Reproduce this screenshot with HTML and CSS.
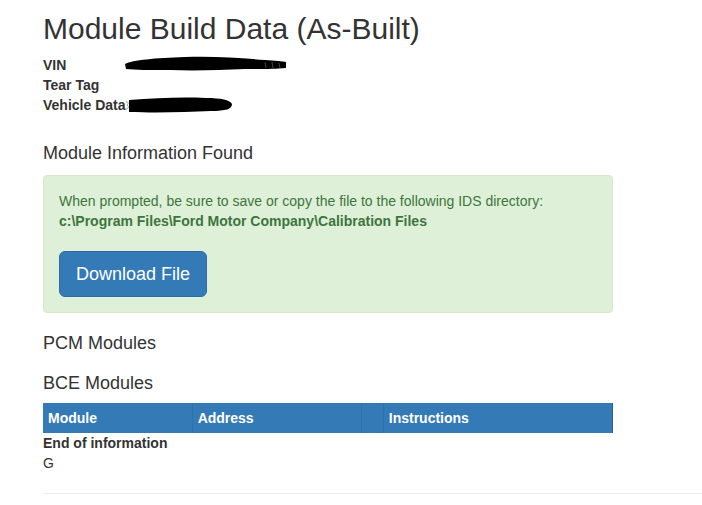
FILE: index.html
```html
<!DOCTYPE html>
<html>
<head>
<meta charset="utf-8">
<title>Module Build Data (As-Built)</title>
<link rel="stylesheet" href="styles.css">
</head>
<body>
<div class="page">
  <h2 class="title">Module Build Data (As-Built)</h2>
  <div class="facts">
    <div class="fact">
      <b class="fact-label">VIN</b>
      <span class="fact-value">
        <svg class="redact" width="164" height="20" viewBox="0 0 164 20">
          <path d="M0,9 C8,5 30,3 60,2 C90,1 115,3 140,5 C150,6 158,6 161,7 L161,13 C150,14 140,14 120,14 C95,15 70,16 45,15 C25,15 10,15 1,14 Z" fill="#000"/>
          <path d="M140,7 L141,13 M147,7 L148,13 M154,8 L155,13" stroke="#444" stroke-width="1"/>
        </svg>
      </span>
    </div>
    <div class="fact">
      <b class="fact-label">Tear Tag</b>
      <span class="fact-value"></span>
    </div>
    <div class="fact">
      <b class="fact-label">Vehicle Data</b>
      <span class="fact-value">
        <svg class="redact" width="110" height="20" viewBox="0 0 110 20">
          <path d="M3,5 C30,3 55,2 80,3 C95,3 104,5 106,9 C106,14 100,16 85,16 C60,17 35,18 3,17 Z" fill="#000"/>
          <path d="M0,7 C2,6 3,9 1,10 C3,11 3,14 0,14" stroke="#999" stroke-width="1" fill="none"/>
        </svg>
      </span>
    </div>
  </div>

  <h4 class="section-title">Module Information Found</h4>
  <div class="alert">
    <p class="alert-text">When prompted, be sure to save or copy the file to the following IDS directory:<br><b>c:\Program Files\Ford Motor Company\Calibration Files</b></p>
    <button class="btn-download" type="button">Download File</button>
  </div>

  <h4 class="section-title">PCM Modules</h4>
  <h4 class="section-title">BCE Modules</h4>
  <table class="modules">
    <colgroup>
      <col class="col-module">
      <col class="col-address">
      <col class="col-blank">
      <col class="col-instr">
    </colgroup>
    <thead>
      <tr>
        <th>Module</th>
        <th>Address</th>
        <th></th>
        <th>Instructions</th>
      </tr>
    </thead>
  </table>
  <div class="end-info">End of information</div>
  <div class="end-code">G</div>
  <hr class="rule">
</div>
</body>
</html>
```

FILE: styles.css
```css
html, body {
  margin: 0;
  padding: 0;
  background: #fff;
}

body {
  font-family: "Liberation Sans", Arial, sans-serif;
  font-size: 14px;
  line-height: 20px;
  color: #333;
}

.page {
  padding-left: 43px;
  padding-top: 12px;
}

.title {
  font-size: 30px;
  font-weight: normal;
  line-height: 33px;
  margin: 0 0 10px;
}

.facts {
  margin-bottom: 28px;
}

.fact {
  display: flex;
  align-items: center;
  height: 20px;
}

.fact-label {
  min-width: 82px;
  font-weight: bold;
  white-space: nowrap;
}

.fact-value {
  display: flex;
  align-items: center;
}

.redact {
  display: block;
}

.section-title {
  font-size: 18px;
  font-weight: normal;
  line-height: 20px;
  margin: 20px 0 10px;
}

.alert {
  width: 538px;
  margin: 12px 0 20px;
  padding: 15px;
  background: #dff0d8;
  border: 1px solid #d6e9c6;
  border-radius: 4px;
  color: #3c763d;
}

.alert-text {
  margin: 0 0 20px;
}

.btn-download {
  display: block;
  font-family: "Liberation Sans", Arial, sans-serif;
  font-size: 18px;
  line-height: 24px;
  padding: 10px 16px;
  color: #fff;
  background: #337ab7;
  border: 1px solid #2e6da4;
  border-radius: 6px;
  cursor: pointer;
}

.modules {
  width: 570px;
  table-layout: fixed;
  border-collapse: collapse;
  margin: 0;
}

.col-module { width: 149px; }
.col-address { width: 169px; }
.col-blank { width: 22px; }
.col-instr { width: 229px; }

.modules th {
  background: #337ab7;
  color: #fff;
  font-weight: bold;
  text-align: left;
  padding: 5px 5px;
  line-height: 20px;
  border-left: 1px solid #3071aa;
}

.modules th:first-child {
  border-left: 0;
}

.modules th:last-child {
  border-right: 1px solid #2a6398;
}

.end-info {
  font-weight: bold;
}

.rule {
  margin: 20px 0 0;
  border: 0;
  border-top: 1px solid #eee;
}
```
